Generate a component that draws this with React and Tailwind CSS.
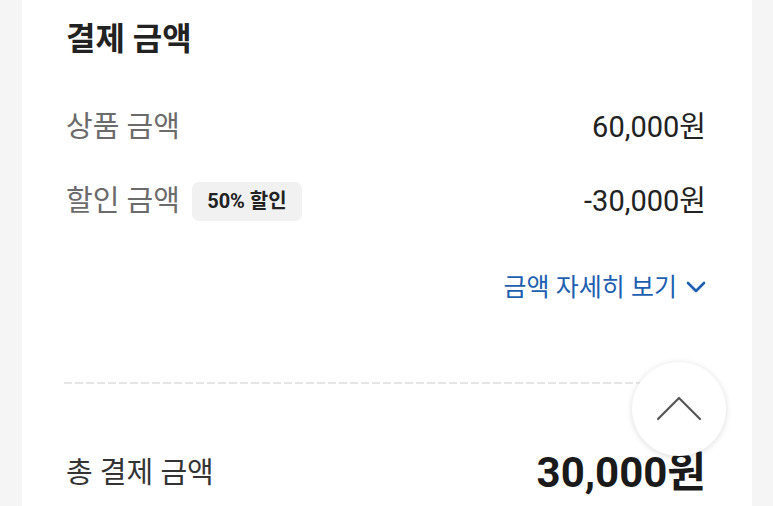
import React from "react";

export default function App() {
  return (
    <div
      className="relative w-[773px] h-[506px] overflow-hidden bg-[#f5f5f5] px-[22px]"
      style={{ fontFamily: "Roboto, 'Noto Sans CJK KR', 'Noto Sans', sans-serif" }}
    >
      <div className="h-full w-[730px] bg-white pl-[44px] pr-[46px]">
        <div className="pt-[20px] h-[58px] flex items-center text-[32px] font-bold text-[#222222] leading-none">
          결제 금액
        </div>

        <div className="mt-[49px] h-[40px] flex items-center justify-between">
          <span className="text-[29px] text-[#6b6b6b] leading-none">상품 금액</span>
          <span className="text-[29px] text-[#222222] leading-none">60,000원</span>
        </div>

        <div className="mt-[34px] h-[40px] flex items-center justify-between">
          <div className="flex items-center gap-[12px]">
            <span className="text-[29px] text-[#6b6b6b] leading-none">할인 금액</span>
            <span className="h-[39px] w-[110px] rounded-[7px] bg-[#f1f1f1] flex items-center justify-center text-[20px] font-bold text-[#222222] leading-none">
              50% 할인
            </span>
          </div>
          <span className="text-[29px] text-[#222222] leading-none">-30,000원</span>
        </div>

        <div className="mt-[46px] h-[40px] flex items-center justify-end gap-[9px] text-[#1d5fb0]">
          <span className="text-[25px] leading-none">금액 자세히 보기</span>
          <svg width="20" height="12" viewBox="0 0 20 12" fill="none">
            <path d="M2 2 L10 10 L18 2" stroke="#1d5fb0" strokeWidth="2.6" strokeLinecap="round" strokeLinejoin="round" />
          </svg>
        </div>

        <div className="mt-[75px] -ml-[2px] h-[2px] bg-[repeating-linear-gradient(to_right,#e6e6e6_0_8px,transparent_8px_11px)]" />

        <div className="mt-[64px] h-[50px] flex items-center justify-between">
          <span className="text-[29px] text-[#333333] leading-none">총 결제 금액</span>
          <span className="text-[42px] font-bold text-[#1a1a1a] leading-none">30,000원</span>
        </div>
      </div>

      <button className="absolute left-[632px] top-[362px] w-[94px] h-[94px] rounded-full bg-white shadow-[0_1px_6px_rgba(0,0,0,0.14)] flex items-center justify-center">
        <svg width="46" height="26" viewBox="0 0 46 26" fill="none">
          <path d="M2 23 L23 2 L44 23" stroke="#555555" strokeWidth="2.2" strokeLinecap="round" strokeLinejoin="round" />
        </svg>
      </button>
    </div>
  );
}
